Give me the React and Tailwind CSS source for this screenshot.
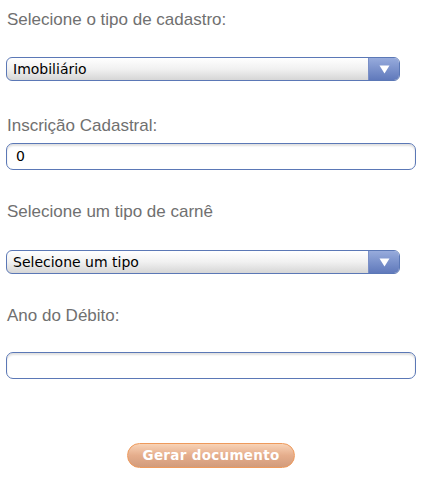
import React from 'react';

const labelCls = "text-[17px] leading-5 text-[#707070] font-['Liberation_Sans',Arial,sans-serif]";

function Select({ value, className = '' }) {
  return (
    <div className={`flex h-6 w-[394px] overflow-hidden rounded-[6px] border border-[#5b78b6] bg-gradient-to-b from-white via-[#f1f1f1] to-[#d6d6d6] ${className}`}>
      <div className="flex flex-1 items-center pl-[6px] text-[14px] text-black font-['DejaVu_Sans',Verdana,sans-serif]">
        {value}
      </div>
      <div className="flex w-[31px] items-center justify-center border-l border-[#7a8fc6] bg-gradient-to-b from-[#97abdc] to-[#6079bb]">
        <svg width="11" height="9" viewBox="0 0 11 9">
          <path d="M0.5 0.5 H10.5 L5.5 8.5 Z" fill="#ffffff" />
        </svg>
      </div>
    </div>
  );
}

function Input({ value, className = '' }) {
  return (
    <div className={`flex h-[27px] w-[410px] items-center rounded-[7px] border-[1.5px] border-[#5b78b6] bg-white pl-[9px] text-[14px] text-black shadow-[inset_0_2px_2px_rgba(0,0,0,0.12)] font-['DejaVu_Sans',Verdana,sans-serif] ${className}`}>
      {value}
    </div>
  );
}

export default function App() {
  return (
    <div className="min-h-[487px] w-[432px] bg-white">
      <div className="flex flex-col px-[6px] pt-[10px]">
        <p className={`${labelCls} pl-[1px]`}>Selecione o tipo de cadastro:</p>
        <Select value="Imobiliário" className="mt-[27px]" />

        <p className={`${labelCls} mt-[35px] pl-[1px]`}>Inscrição Cadastral:</p>
        <Input value="0" className="mt-[7px]" />

        <p className={`${labelCls} mt-[32px] pl-[1px]`}>Selecione um tipo de carnê</p>
        <Select value="Selecione um tipo" className="mt-[28px]" />

        <p className={`${labelCls} mt-[32px] pl-[1px]`}>Ano do Débito:</p>
        <Input value="" className="mt-[26px]" />

        <div className="mt-[64px] flex w-[410px] justify-center">
          <button className="h-[25px] w-[168px] rounded-full border-[1.5px] border-[#ee9a5c] bg-gradient-to-b from-[#f8d3b6] via-[#e5ad8c] to-[#d29c7c] text-[13.5px] font-bold tracking-[0.3px] text-white font-['DejaVu_Sans',Verdana,sans-serif]">
            Gerar documento
          </button>
        </div>
      </div>
    </div>
  );
}
